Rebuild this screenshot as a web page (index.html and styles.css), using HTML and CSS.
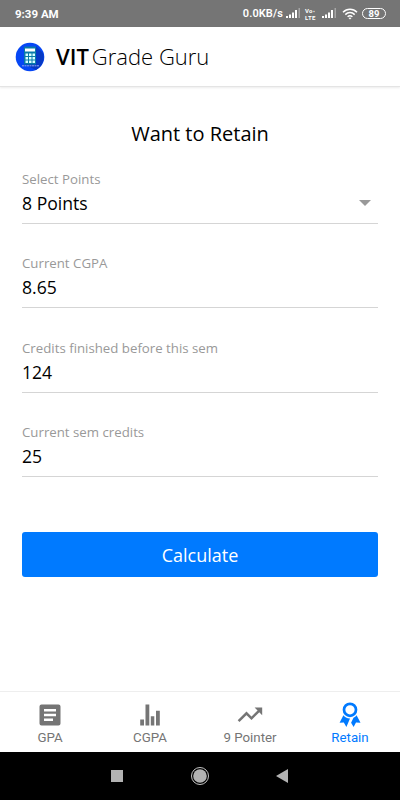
FILE: index.html
```html
<!DOCTYPE html>
<html lang="en">
<head>
    <meta charset="UTF-8">
    <meta name="viewport" content="width=device-width, initial-scale=1.0">
    <title>VIT Grade Guru</title>
    <link rel="stylesheet" href="styles.css">
</head>
<body>
    <div class="status-bar">
        <span class="clock">9:39 AM</span>
        <div class="status-right">
            <span class="speed">0.0KB/s</span>
            <svg class="signal" width="15" height="11" viewBox="0 0 15 11">
                <path fill="#fff" d="M0 8h2v2H0zM3 6.500h2V10H3zM6 4.500h2V10H6zM9 2h2v8H9z"/>
                <path fill="#a5a5a5" d="M12.500 0h1.500v10h-1.500z"/>
            </svg>
            <span class="volte"><span>Vo&#8901;</span><span>LTE</span></span>
            <svg class="signal signal-two" width="15" height="11" viewBox="0 0 15 11">
                <path fill="#fff" d="M0 8h2v2H0zM3 6.500h2V10H3zM6 4.500h2V10H6zM9 2h2v8H9z"/>
                <path fill="#a5a5a5" d="M12.500 0h1.500v10h-1.500z"/>
            </svg>
            <svg class="wifi" width="16" height="12" viewBox="0 0 16 12">
                <g fill="none" stroke="#fff" stroke-width="1.500">
                    <path d="M1 4.300C5 .2 11 .2 15 4.300"/>
                    <path d="M3.300 6.600c2.700-2.700 6.700-2.700 9.400 0"/>
                    <path d="M5.600 8.800c1.500-1.300 3.300-1.300 4.800 0"/>
                </g>
                <path fill="#fff" d="M6.500 10c1-.7 2-.7 3 0L8 11.600z"/>
            </svg>
            <span class="battery">89</span>
        </div>
    </div>

    <header class="header">
        <svg class="logo" width="30" height="30" viewBox="0 0 30 30">
            <circle cx="15" cy="15" r="14.300" fill="#0647f5"/>
            <path fill="#0739c4" d="M21 4l7 7a14.300 14.300 0 0 1-7 17l-12-6h12z"/>
            <rect x="9" y="4.500" width="12" height="18" rx="1" fill="#087ba9"/>
            <path fill="#fff" d="M10 6.500h10v3H10z"/>
            <path fill="#d9ffff" d="M10.500 11.500h2.500V14h-2.500zM14 11.500h2.500V14H14zM17.500 11.500H20V14h-2.500zM10.500 15h2.500v2.500h-2.500zM14 15h2.500v2.500H14zM17.500 15H20v2.500h-2.500zM10.500 18.500h2.500V21h-2.500zM14 18.500h2.500V21H14zM17.500 18.500H20V21h-2.500z"/>
            <path stroke="#8fa9ee" stroke-width="1" stroke-dasharray="2 .5" d="M7 23.800h17"/>
        </svg>
        <h1 class="brand"><b>VIT</b><span>Grade Guru</span></h1>
    </header>

    <main class="content">
        <h2 class="title">Want to Retain</h2>
        <div class="field">
            <span class="label">Select Points</span>
            <div class="value">8 Points<i class="arrow"></i></div>
        </div>
        <div class="field">
            <span class="label">Current CGPA</span>
            <div class="value">8.65</div>
        </div>
        <div class="field">
            <span class="label">Credits finished before this sem</span>
            <div class="value">124</div>
        </div>
        <div class="field">
            <span class="label">Current sem credits</span>
            <div class="value">25</div>
        </div>
        <button class="button" type="button">Calculate</button>
    </main>

    <nav class="tabs">
        <a class="tab">
            <svg width="24" height="24" viewBox="0 0 24 24">
                <path fill="#757575" fill-rule="evenodd" d="M3.500 1.500h17a2 2 0 0 1 2 2v17a2 2 0 0 1-2 2h-17a2 2 0 0 1-2-2v-17a2 2 0 0 1 2-2zM6 6v2.500h12V6zM6 10.800v2.500h12v-2.500zM6 15.500V18h9v-2.500z"/>
            </svg>
            <span>GPA</span>
        </a>
        <a class="tab">
            <svg width="24" height="24" viewBox="0 0 24 24">
                <path fill="#757575" d="M2.200 16.500h3.800v6H2.200zM7.500 1.500h3.800v21H7.500zM12.800 13.200h3.500v9.300h-3.500zM18 7.800h3.800v14.700H18z"/>
            </svg>
            <span>CGPA</span>
        </a>
        <a class="tab">
            <svg width="26" height="24" viewBox="0 0 26 24">
                <path fill="none" stroke="#757575" stroke-width="2.500" d="M1.600 18.200l7.900-7.900 5 5L22.500 7.300"/>
                <path fill="#757575" d="M17.600 4.600h7.600v7.600z"/>
            </svg>
            <span>9 Pointer</span>
        </a>
        <a class="tab active">
            <svg width="24" height="26" viewBox="0 0 24 26">
                <circle cx="12" cy="7.800" r="6" fill="none" stroke="#007aff" stroke-width="2.700"/>
                <path fill="#007aff" d="M5.400 13.200c1.400 2 3.400 3.100 6.600 3.300l-3.600 8.600-2.600-4.600-4.200.2zM18.600 13.200c-.8 1.100-1.800 2-3.100 2.600l-2.400 5 2.500 4.300 2.400-4.600 4.500.2z"/>
            </svg>
            <span>Retain</span>
        </a>
    </nav>

    <div class="nav-bar">
        <svg width="20" height="20" viewBox="0 0 20 20"><path fill="#b2b2b2" d="M4 4h12v12H4z"/></svg>
        <svg width="20" height="20" viewBox="0 0 20 20">
            <circle cx="10" cy="10" r="8.500" fill="none" stroke="#c5c5c5" stroke-width="1"/>
            <circle cx="10" cy="10" r="6.800" fill="#b2b2b2"/>
        </svg>
        <svg width="20" height="20" viewBox="0 0 20 20"><path fill="#b2b2b2" d="M3 10l12-7v14z"/></svg>
    </div>
</body>
</html>
```
FILE: styles.css
```css
* {
    box-sizing: border-box;
}
body {
    margin: 0;
    height: 800px;
    display: flex;
    flex-direction: column;
    overflow: hidden;
    background-color: #fff;
    font-family: "Open Sans", sans-serif;
    color: #000;
}
.status-bar {
    height: 27px;
    flex: none;
    display: flex;
    justify-content: space-between;
    align-items: center;
    padding: 0 14px 0 15px;
    background-color: #757575;
    color: #fff;
    font-family: Roboto, sans-serif;
    font-size: 11.5px;
    font-weight: 700;
}
.status-right {
    display: flex;
    align-items: center;
}
.speed {
    font-size: 11px;
    font-weight: 600;
    letter-spacing: 0.1px;
}
.signal {
    margin-left: 3px;
}
.volte {
    display: flex;
    flex-direction: column;
    width: 13px;
    margin-left: 4px;
    font-size: 6px;
    line-height: 7px;
    letter-spacing: 0.3px;
}
.volte span {
    height: 7px;
}
.signal-two {
    margin-left: 4px;
}
.wifi {
    margin-left: 5px;
}
.battery {
    width: 24px;
    height: 11px;
    margin-left: 4px;
    border: 1px solid #fff;
    border-radius: 6px;
    font-size: 9.5px;
    line-height: 9.5px;
    text-align: center;
}
.header {
    height: 60px;
    flex: none;
    display: flex;
    align-items: center;
    padding-left: 15px;
    border-bottom: 1px solid #e4e4e4;
    box-shadow: 0 1px 2px rgba(0, 0, 0, 0.08);
}
.brand {
    display: flex;
    gap: 3px;
    margin: 0 0 2px 11px;
    font-size: 22px;
    font-weight: 300;
    line-height: 30px;
}
.brand b {
    font-weight: 600;
}
.content {
    flex: 1;
    padding: 32px 22px 0;
}
.title {
    margin: 0 0 21px;
    font-size: 20px;
    font-weight: 400;
    line-height: 30px;
    text-align: center;
}
.field {
    height: 54px;
    margin-bottom: 30.4px;
    border-bottom: 1px solid #d5d5d5;
}
.label {
    display: block;
    color: #999;
    font-size: 13.25px;
    line-height: 18px;
}
.value {
    display: flex;
    justify-content: space-between;
    align-items: center;
    padding: 1px 7px 0 0;
    font-size: 17.6px;
    line-height: 28px;
}
.arrow {
    border: 6.5px solid transparent;
    border-top-color: #999;
    border-bottom: 0;
}
.button {
    display: block;
    width: 100%;
    height: 45px;
    margin-top: 55px;
    padding: 0;
    border: none;
    border-radius: 3px;
    background-color: #007aff;
    color: #fff;
    font-family: inherit;
    font-size: 18px;
}
.tabs {
    height: 61px;
    flex: none;
    display: grid;
    grid-template-columns: repeat(4, 1fr);
    border-top: 1px solid #eee;
}
.tab {
    display: flex;
    flex-direction: column;
    align-items: center;
    gap: 1px;
    padding-top: 10px;
    color: #757575;
    font-family: Roboto, sans-serif;
    font-size: 13.3px;
    line-height: 18px;
}
.tab svg {
    height: 26px;
}
.active {
    color: #007aff;
}
.nav-bar {
    height: 48px;
    flex: none;
    display: flex;
    justify-content: center;
    align-items: center;
    gap: 63px;
    background-color: #000;
}
```
